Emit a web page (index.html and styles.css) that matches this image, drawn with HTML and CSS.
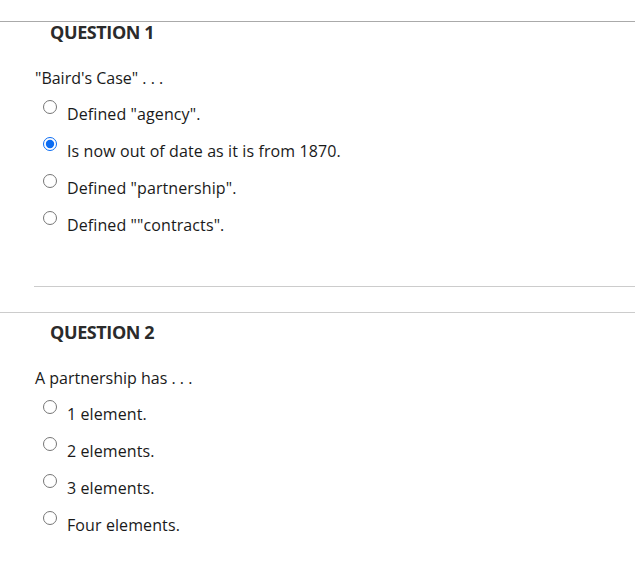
FILE: index.html
```html
<!DOCTYPE html>
<html>
<head>
<meta charset="utf-8">
<link rel="stylesheet" href="styles.css">
</head>
<body>
<div class="page">
  <section class="question first">
    <h2 class="q-title">QUESTION 1</h2>
    <div class="q-body">
      <p class="q-text">"Baird's Case" . . .</p>
      <ul class="options">
        <li class="option"><input class="radio" type="radio" name="q1"><span class="label">Defined "agency".</span></li>
        <li class="option"><input class="radio" type="radio" name="q1" checked><span class="label">Is now out of date as it is from 1870.</span></li>
        <li class="option"><input class="radio" type="radio" name="q1"><span class="label">Defined "partnership".</span></li>
        <li class="option"><input class="radio" type="radio" name="q1"><span class="label">Defined ""contracts".</span></li>
      </ul>
    </div>
    <div class="q-sep"></div>
  </section>
  <section class="question second">
    <h2 class="q-title">QUESTION 2</h2>
    <div class="q-body">
      <p class="q-text">A partnership has . . .</p>
      <ul class="options">
        <li class="option"><input class="radio" type="radio" name="q2"><span class="label">1 element.</span></li>
        <li class="option"><input class="radio" type="radio" name="q2"><span class="label">2 elements.</span></li>
        <li class="option"><input class="radio" type="radio" name="q2"><span class="label">3 elements.</span></li>
        <li class="option"><input class="radio" type="radio" name="q2"><span class="label">Four elements.</span></li>
      </ul>
    </div>
  </section>
</div>
</body>
</html>
```

FILE: styles.css
```css
html, body {
  margin: 0;
  padding: 0;
  background: #fff;
}
body {
  font-family: "Open Sans", "Liberation Sans", sans-serif;
  color: #1a1a1a;
}
.page {
  padding-top: 21px;
}
.question {
  border-top: 1px solid #aaa;
}
.question.second {
  border-top-color: #ccc;
}
.q-title {
  margin: 0;
  padding: 0 0 0 50px;
  font-size: 18px;
  font-weight: 700;
  line-height: 20px;
  color: #2b2b2b;
  letter-spacing: -0.4px;
}
.second .q-title {
  padding-top: 9px;
}
.q-body {
  padding-left: 35px;
}
.q-text {
  margin: 0;
  padding-top: 25px;
  font-size: 16px;
  line-height: 22px;
}
.options {
  list-style: none;
  margin: 0;
  padding: 0;
}
.option {
  display: flex;
  align-items: flex-start;
  height: 37px;
  box-sizing: border-box;
  padding: 11px 0 0 8px;
}
.radio {
  width: 14px;
  height: 14px;
  margin: 0 10px 0 0;
  flex: none;
  accent-color: #0b6cf2;
}
.label {
  font-size: 16px;
  line-height: 22px;
  padding-top: 3px;
  letter-spacing: 0.1px;
}
.q-sep {
  margin: 49px 0 25px 34px;
  border-top: 1px solid #ccc;
}
```
